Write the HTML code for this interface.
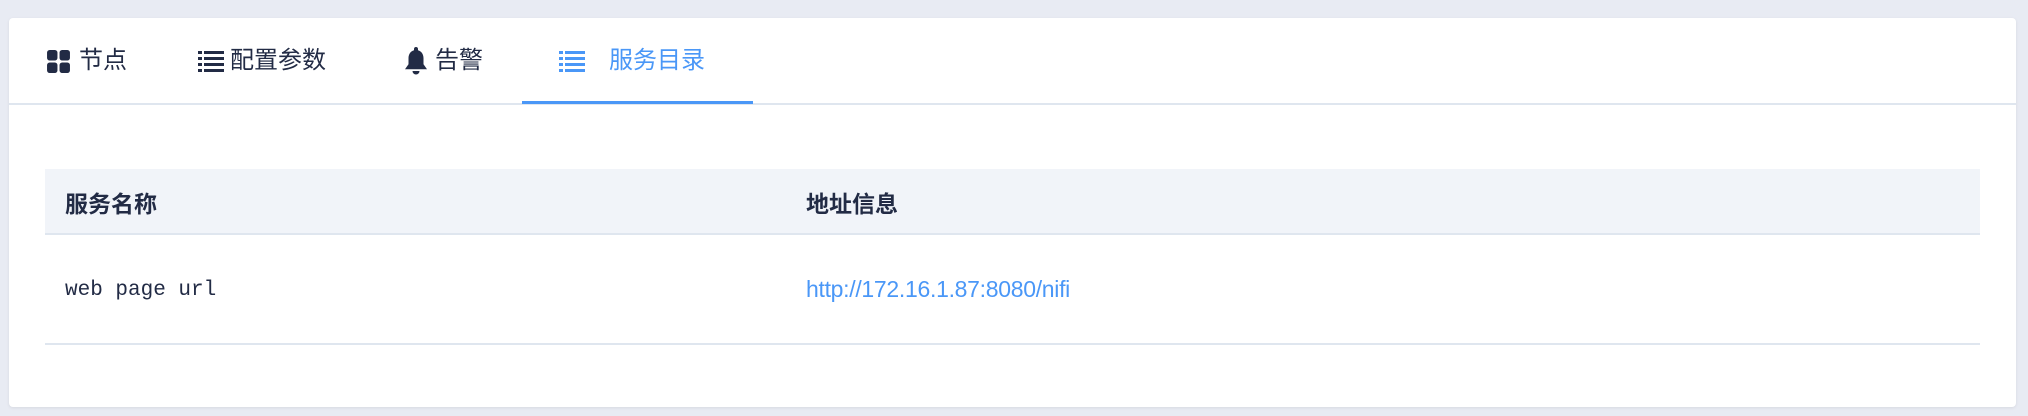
<!DOCTYPE html>
<html><head><meta charset="utf-8"><style>
body{margin:0;width:2028px;height:416px;background:#e8ebf3;font-family:"Liberation Sans","Noto Sans CJK SC",sans-serif;overflow:hidden}
.card{position:absolute;left:9px;top:18px;width:2007px;height:389px;background:#fff;border-radius:4px;box-shadow:0 1px 3px rgba(0,0,0,.08)}
.tabs{position:absolute;left:0;top:0;width:2007px;height:85px;border-bottom:2px solid #dfe6ef}
.tab{position:absolute;top:27px;font-size:24px;color:#222b45;display:flex;align-items:center;gap:8px;line-height:32px}
.active{color:#4a97f7}
.ul{position:absolute;left:513px;top:83px;width:231px;height:3px;background:#4a97f7}
.th{position:absolute;left:36px;top:151px;width:1935px;height:64px;background:#f1f4f9;border-bottom:2px solid #dfe6ef}
.th span{position:absolute;top:16px;font-size:23px;font-weight:bold;color:#222b45}
.row{position:absolute;left:36px;top:217px;width:1935px;height:108px;border-bottom:2px solid #dfe6ef}
.mono{position:absolute;left:20px;top:44px;font-family:"Liberation Mono",monospace;font-size:21px;color:#222b45}
.url{position:absolute;left:761px;top:41px;font-size:23px;color:#4a97f7;letter-spacing:-0.3px}
</style></head><body>
<div class="card">
<div class="tabs">
<div class="tab" style="left:37px"><svg width="25" height="25" viewBox="0 0 24 24" fill="#222b45"><rect x="1" y="1" width="10" height="10" rx="2.5"/><rect x="13" y="1" width="10" height="10" rx="2.5"/><rect x="1" y="13" width="10" height="10" rx="2.5"/><rect x="13" y="13" width="10" height="10" rx="2.5"/></svg><span>节点</span></div>
<div class="tab" style="left:189px;gap:6px"><svg width="26" height="22" viewBox="0 0 26 22" fill="#222b45"><rect x="0" y="1" width="4" height="3"/><rect x="6" y="1" width="20" height="3"/><rect x="0" y="7" width="4" height="3"/><rect x="6" y="7" width="20" height="3"/><rect x="0" y="13" width="4" height="3"/><rect x="6" y="13" width="20" height="3"/><rect x="0" y="19" width="4" height="3"/><rect x="6" y="19" width="20" height="3"/></svg><span>配置参数</span></div>
<div class="tab" style="left:396px"><svg width="22" height="28" viewBox="0 0 22 28" fill="#222b45"><path d="M11 0c1.2 0 2 .8 2 2v1.2c3.5 1 5.5 4 5.5 8v6l3.5 5H0l3.5-5v-6c0-4 2-7 5.5-8V2c0-1.2.8-2 2-2zM7.5 24h7a3.5 3.5 0 0 1-7 0z"/></svg><span>告警</span></div>
<div class="tab active" style="left:550px;gap:24px"><svg width="26" height="22" viewBox="0 0 26 22" fill="#4a97f7"><rect x="0" y="1" width="4" height="3"/><rect x="6" y="1" width="20" height="3"/><rect x="0" y="7" width="4" height="3"/><rect x="6" y="7" width="20" height="3"/><rect x="0" y="13" width="4" height="3"/><rect x="6" y="13" width="20" height="3"/><rect x="0" y="19" width="4" height="3"/><rect x="6" y="19" width="20" height="3"/></svg><span>服务目录</span></div>
<div class="ul"></div>
</div>
<div class="th"><span style="left:20px">服务名称</span><span style="left:761px">地址信息</span></div>
<div class="row"><span class="mono">web page url</span><span class="url">http://172.16.1.87:8080/nifi</span></div>
</div>
</body></html>
